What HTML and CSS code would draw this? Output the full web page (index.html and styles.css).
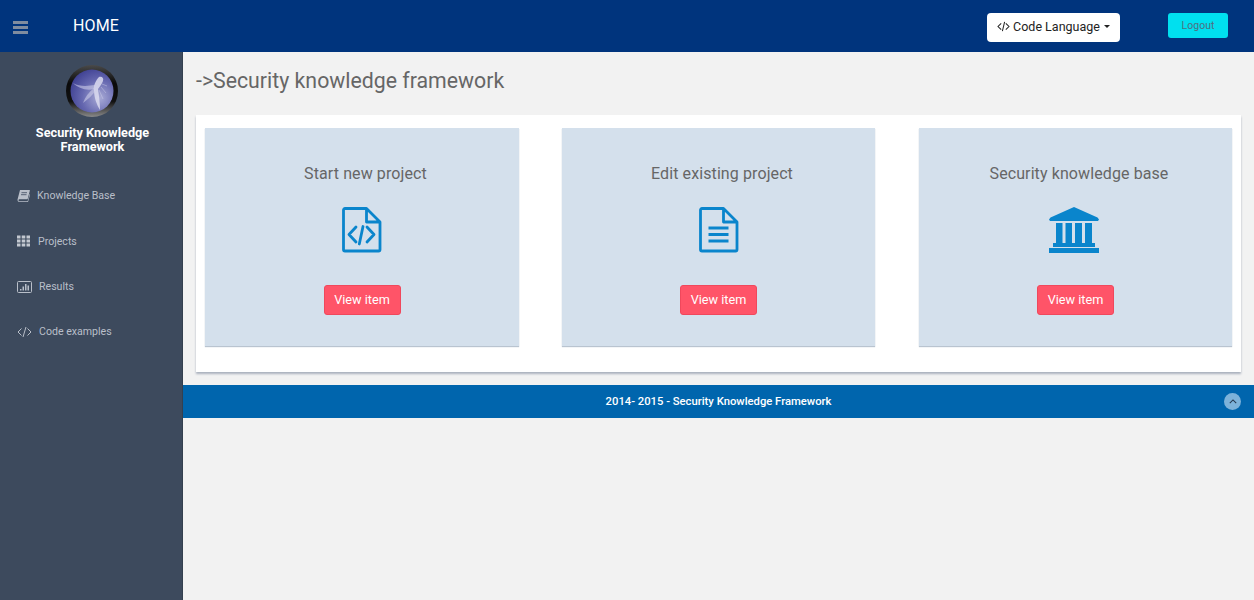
FILE: index.html
```html
<!DOCTYPE html>
<html lang="en">
<head>
<meta charset="utf-8">
<title>Security Knowledge Framework</title>
<link rel="stylesheet" href="styles.css">
</head>
<body>
<header class="topbar">
  <button class="burger" aria-label="Menu"><span></span><span></span><span></span></button>
  <div class="home">HOME</div>
  <button class="lang"><svg class="code-ic" viewBox="0 0 14 12"><path d="M4.500 2.500 1 6l3.500 3.500M9.500 2.500 13 6 9.500 9.500M8.200 1 5.800 11" fill="none" stroke="currentColor" stroke-width="1.100"/></svg>Code Language<i class="caret"></i></button>
  <button class="logout">Logout</button>
</header>
<div class="body">
  <aside class="sidebar">
    <svg class="logo" viewBox="0 0 52 52">
      <defs>
        <radialGradient id="disc" cx="0.68" cy="0.66" r="0.75"><stop offset="0" stop-color="#a9abd6"/><stop offset="0.55" stop-color="#6668b0"/><stop offset="1" stop-color="#3e4092"/></radialGradient>
        <linearGradient id="ring" x1="0" y1="0" x2="0" y2="1"><stop offset="0" stop-color="#4a4a4a"/><stop offset="0.35" stop-color="#0a0a0a"/><stop offset="0.7" stop-color="#111"/><stop offset="1" stop-color="#8a8a8a"/></linearGradient>
      </defs>
      <circle cx="26" cy="26" r="26" fill="url(#ring)"/>
      <circle cx="26" cy="26" r="21.500" fill="url(#disc)"/>
      <path d="M33 12c3-1 5 1 4 4-1 3-3 5-5 8 1 7 2 14 2 21-3-5-6-12-6-20-1-4 2-10 5-13z" fill="#dcdcf0" fill-opacity=".85"/>
      <path d="M29 20C22 21 14 22 7 18c5 5 13 8 21 6z" fill="#d3d4ec" fill-opacity=".55"/>
      <path d="M28 23c-5 4-9 9-11 15 5-4 10-8 13-13z" fill="#d3d4ec" fill-opacity=".55"/>
      <path d="M36 19l5 2M35 22l5 6M33 25l4 9" fill="none" stroke="#d3d4ec" stroke-opacity=".6" stroke-width=".7"/>
    </svg>
    <div class="brand">Security Knowledge Framework</div>
    <nav class="menu">
      <a class="item"><svg class="mi" viewBox="0 0 13 12"><path d="M3 0H12.500c.3 0 .5.3.4.6L10.600 9.300H2.600c-.8 0-1.100.6-1.100 1 0 .5.3 1 1.100 1h8l2.100-7.500.5.2-2.200 8H2.300C1 12 .5 10.800.5 9.800L.6 9.300z" fill="#b9bfc9"/><path d="M4.500 2.700h5.500M4 4.700h5.500" stroke="#3d4a5d" stroke-width=".8"/></svg><span>Knowledge Base</span></a>
      <a class="item i2"><svg class="mi" viewBox="0 0 13 11"><path d="M0 0h3.500v3H0zM4.700 0h3.600v3H4.700zM9.500 0H13v3H9.500zM0 4h3.500v3H0zM4.700 4h3.600v3H4.700zM9.500 4H13v3H9.500zM0 8h3.500v3H0zM4.700 8h3.600v3H4.700zM9.500 8H13v3H9.500z" fill="#c3c8d0"/></svg><span>Projects</span></a>
      <a class="item i3"><svg class="mi w" viewBox="0 0 15 12"><rect x=".5" y=".5" width="14" height="11" rx="1" fill="none" stroke="#b9bfc9"/><path d="M3 8h1.500v1.500H3zM5.500 5.500H7v4H5.500zM8 3h1.500v6.500H8zM10.500 4.500H12v5h-1.500z" fill="#b9bfc9"/></svg><span>Results</span></a>
      <a class="item i3"><svg class="mi w" viewBox="0 0 15 12"><path d="M4.500 2.500 1 6l3.500 3.500M10.500 2.500 14 6l-3.500 3.500M9 1 6 11" fill="none" stroke="#b9bfc9" stroke-width="1"/></svg><span>Code examples</span></a>
    </nav>
  </aside>
  <main class="main">
    <h1 class="title">-&gt;Security knowledge framework</h1>
    <section class="panel">
      <article class="card">
        <h2>Start new project</h2>
        <svg class="ic" viewBox="0 0 50 46"><g transform="translate(5)"><path d="M3 1.500h21.500L38 15v27.500a1.500 1.500 0 0 1-1.500 1.500h-33.500a1.500 1.500 0 0 1-1.500-1.500V3a1.500 1.500 0 0 1 1.500-1.500zM24.500 1.500V15H38" fill="none" stroke="#0a85cc" stroke-width="2.800" stroke-linejoin="round"/><path d="M14 20l-7 7.500 7 7.500M25 20l7 7.500-7 7.500M21 19.500l-3.700 17.500" fill="none" stroke="#0a85cc" stroke-width="2.800" stroke-linecap="round" stroke-linejoin="round"/></g></svg>
        <button class="view">View item</button>
      </article>
      <article class="card">
        <h2>Edit existing project</h2>
        <svg class="ic" viewBox="0 0 50 46"><g transform="translate(5)"><path d="M3 1.500h21.500L38 15v27.500a1.500 1.500 0 0 1-1.500 1.500h-33.500a1.500 1.500 0 0 1-1.500-1.500V3a1.500 1.500 0 0 1 1.500-1.500zM24.500 1.500V15H38" fill="none" stroke="#0a85cc" stroke-width="2.800" stroke-linejoin="round"/><path d="M9.500 21h20M9.500 27.500h20M9.500 34h20" stroke="#0a85cc" stroke-width="2.800"/></g></svg>
        <button class="view">View item</button>
      </article>
      <article class="card">
        <h2>Security knowledge base</h2>
        <svg class="ic" viewBox="0 0 50 46"><path d="M25 0 48.500 10.500 50 12.500 49 14H1L0 12.500 1.500 10.500zM7 16h6.500v20H7zM16.500 16H23v20h-6.500zM26 16h7v20h-7zM36 16h7v20h-7zM4 36h42v4H4zM0 41h50v5H0z" fill="#0a85cc"/></svg>
        <button class="view">View item</button>
      </article>
    </section>
    <footer class="footer">
      <span>2014- 2015 - Security Knowledge Framework</span>
      <button class="up" aria-label="Back to top"><svg viewBox="0 0 10 6"><path d="M1 5l4-4 4 4" fill="none" stroke="#24384f" stroke-width="1.300"/></svg></button>
    </footer>
  </main>
</div>
</body>
</html>
```
FILE: styles.css
```css
* { box-sizing: border-box; }
html, body { margin: 0; height: 600px; overflow: hidden; }
body { font-family: Roboto, "Noto Sans", sans-serif; background: #f2f2f2; color: #666; }
button { font-family: inherit; cursor: pointer; }

.topbar { height: 52px; background: #00347d; display: flex; align-items: center; padding: 0 26px 0 13px; }
.burger { width: 15px; height: 13px; padding: 0; border: 0; background: none; display: flex; flex-direction: column; justify-content: space-between; margin-top: 2px; }
.burger span { display: block; height: 3px; background: #7f8c9f; }
.home { margin-left: 45px; margin-bottom: 2px; color: #fff; font-size: 16px; letter-spacing: .15px; }
.lang { margin-left: auto; width: 133px; height: 29px; margin-top: 3px; background: #fff; border: 0; border-radius: 4px; color: #222; font-size: 12.500px; display: flex; align-items: center; justify-content: center; padding: 0 0 2px; white-space: nowrap; }
.code-ic { width: 13px; height: 11px; margin-right: 3px; }
.caret { margin-left: 4px; border-top: 3.500px solid #222; border-left: 3.500px solid transparent; border-right: 3.500px solid transparent; }
.logout { margin-left: 48px; width: 60px; height: 25px; background: #00e0ef; border: 0; border-radius: 3px; color: #4f6f80; font-size: 10.500px; padding: 0; margin-bottom: 1px; }

.body { display: flex; height: 548px; }
.sidebar { width: 183px; flex: none; background: #3d4a5d; display: flex; flex-direction: column; align-items: stretch; padding-top: 13px; box-shadow: inset -1px 0 0 #34404f; }
.logo { width: 52px; height: 52px; align-self: center; flex: none; margin-left: 1px; }
.brand { margin-top: 9px; padding: 0 21px 0 23px; text-align: center; color: #fff; font-size: 12.700px; font-weight: 700; line-height: 13.500px; }
.menu { margin-top: 20px; display: flex; flex-direction: column; padding-left: 17px; }
.item { height: 45px; display: flex; align-items: center; gap: 7px; color: #b9bfc9; font-size: 10.600px; }
.i2 { height: 46px; gap: 8px; }
.mi { width: 13px; height: 12px; flex: none; }
.mi.w { width: 15px; }

.main { flex: 1; min-width: 0; display: flex; flex-direction: column; }
.title { margin: 0; height: 63px; padding: 15px 0 0 13px; font-size: 21.300px; line-height: 28px; font-weight: 400; color: #666; }
.panel { margin: 0 13px; height: 257px; background: #fff; box-shadow: 0 2px 2px #aab1bd; padding: 13px 9px 0; display: flex; gap: 43px; align-items: flex-start; }
.card { flex: none; width: 313px; height: 218px; background: #d4e0ec; box-shadow: 0 1px 1px #b9c4d0; display: flex; flex-direction: column; align-items: center; }
.card:first-child { width: 314px; }
.card:last-child { margin-left: 1px; }
.card:last-child .ic { margin-right: 3px; }
.card h2 { margin: 36px 0 0 7px; font-size: 16px; line-height: 20px; font-weight: 400; color: #666; letter-spacing: .1px; }
.ic { height: 46px; width: 50px; margin-top: 23px; }
.view { margin-top: 32px; width: 77px; height: 30px; background: #ff5468; border: 1px solid #f0485c; border-radius: 3px; color: #fff; font-size: 12.700px; padding: 0 0 2px; }
.footer { margin-top: 13px; height: 33px; background: #0065ad; display: flex; align-items: center; justify-content: center; position: relative; color: #fff; font-size: 11.250px; font-weight: 500; }
.up { position: absolute; right: 13px; top: 8px; width: 17px; height: 17px; border: 0; border-radius: 50%; background: #7db2da; padding: 0 3px; display: flex; align-items: center; justify-content: center; }
.up svg { width: 8px; height: 5px; }
```
